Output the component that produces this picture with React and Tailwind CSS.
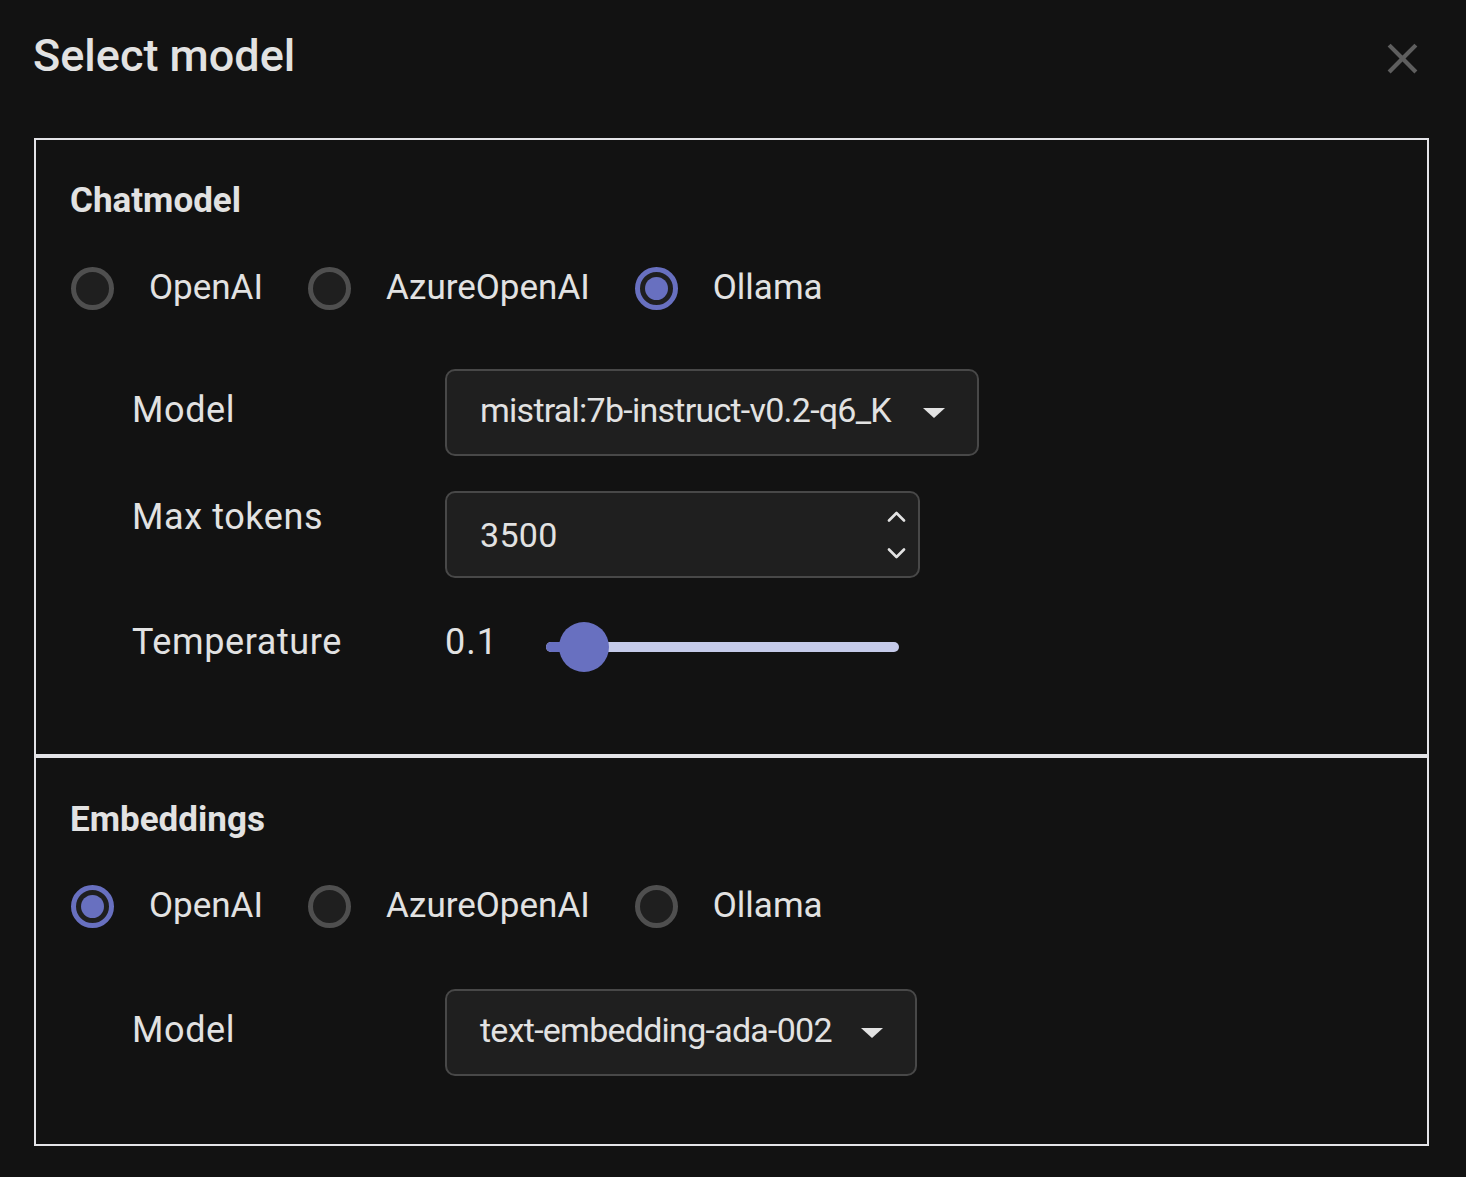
import React, { useState } from 'react';

const ACCENT = '#6870c0';

function Radio({ label, checked, onSelect }) {
  return (
    <button type="button" onClick={onSelect} className="flex items-center h-[60px]">
      <span
        className={
          checked
            ? 'w-[43px] h-[43px] rounded-full border-[5px] border-[#6870c0] bg-[#1f1f1f] flex items-center justify-center'
            : 'w-[43px] h-[43px] rounded-full border-[5px] border-[#4f4f4f] bg-[#1f1f1f]'
        }
      >
        {checked && <span className="w-[23px] h-[23px] rounded-full bg-[#6870c0]" />}
      </span>
      <span className="ml-[35px] text-[35px] leading-[42px] text-[#e2e2e2]">{label}</span>
    </button>
  );
}

function RadioGroup({ options, value, onChange }) {
  return (
    <div className="flex items-center gap-[45px]">
      {options.map(o => (
        <Radio key={o} label={o} checked={value === o} onSelect={() => onChange(o)} />
      ))}
    </div>
  );
}

function Caret() {
  return (
    <svg width="24" height="12" viewBox="0 0 24 12" className="shrink-0">
      <polygon points="1,1 23,1 12,11" fill="#e2e2e2" />
    </svg>
  );
}

function Select({ value, width }) {
  return (
    <div
      className={`${width} h-[87px] rounded-[10px] border-2 border-[#484848] bg-[#1f1f1f] flex items-center justify-between pl-[33px] pr-[31px]`}
    >
      <span className="mb-[5px] whitespace-nowrap text-[34px] leading-[42px] text-[#e2e2e2] tracking-[-0.75px]">{value}</span>
      <Caret />
    </div>
  );
}

function Spinner() {
  return (
    <div className="flex flex-col gap-[26px] items-center">
      <svg width="19" height="11" viewBox="0 0 19 11">
        <polyline points="2,9.5 9.5,2 17,9.5" fill="none" stroke="#e2e2e2" strokeWidth="2.6" strokeLinecap="round" strokeLinejoin="round" />
      </svg>
      <svg width="19" height="11" viewBox="0 0 19 11">
        <polyline points="2,1.5 9.5,9 17,1.5" fill="none" stroke="#e2e2e2" strokeWidth="2.6" strokeLinecap="round" strokeLinejoin="round" />
      </svg>
    </div>
  );
}

function Label({ children, className = '' }) {
  return (
    <div className={`w-[313px] shrink-0 -ml-[1px] text-[36px] leading-[42px] text-[#e2e2e2] tracking-[0.6px] ${className}`}>
      {children}
    </div>
  );
}

export default function App() {
  const [chat, setChat] = useState('Ollama');
  const [embed, setEmbed] = useState('OpenAI');
  const providers = ['OpenAI', 'AzureOpenAI', 'Ollama'];

  return (
    <div
      className="w-full min-h-[1177px] bg-[#121212] pl-[34px] pr-[37px] text-[#e2e2e2]"
      style={{ fontFamily: 'Roboto, "Noto Sans", sans-serif' }}
    >
      {/* header */}
      <div className="flex items-center justify-between h-[110px] mb-[28px]">
        <h1 className="text-[45px] leading-none font-medium text-[#e2e2e2] -ml-[1px]">Select model</h1>
        <svg width="51" height="51" viewBox="0 0 24 24" className="mt-[6px] mr-[1px]">
          <path
            fill="#5e5e5e"
            d="M19 6.41 17.59 5 12 10.59 6.41 5 5 6.41 10.59 12 5 17.59 6.41 19 12 13.41 17.59 19 19 17.59 13.41 12z"
          />
        </svg>
      </div>

      {/* chat model */}
      <section className="h-[618px] border-2 border-[#e4e4e8] pt-[31px] pl-[35px]">
        <h2 className="h-[60px] flex items-center text-[35px] font-bold text-[#e2e2e2] -ml-[1px]">Chatmodel</h2>
        <div className="mt-[27px]">
          <RadioGroup options={providers} value={chat} onChange={setChat} />
        </div>

        <div className="ml-[62px] flex flex-col">
          <div className="mt-[51px] flex items-center">
            <Label className="-mt-[6px]">Model</Label>
            <Select value="mistral:7b-instruct-v0.2-q6_K" width="w-[534px]" />
          </div>

          <div className="mt-[35px] flex items-start">
            <Label className="pt-[5px]">Max tokens</Label>
            <div className="w-[475px] h-[87px] rounded-[10px] border-2 border-[#484848] bg-[#1f1f1f] flex items-center justify-between pl-[33px] pr-[12px]">
              <span className="text-[34px] leading-[42px] text-[#e2e2e2] tracking-[0.3px]">3500</span>
              <Spinner />
            </div>
          </div>

          <div className="mt-[37px] h-[64px] flex items-center">
            <Label className="mb-[10px]">Temperature</Label>
            <div className="w-[101px] shrink-0 text-[36px] leading-[42px] text-[#e2e2e2] tracking-[1px] mb-[10px]">0.1</div>
            <div className="relative w-[353px] h-[10px] rounded-full bg-[#c5cae9]">
              <div className="absolute left-0 top-0 h-[10px] w-[40px] rounded-full bg-[#6870c0]" />
              <div
                className="absolute top-1/2 -translate-y-1/2 left-[13px] w-[50px] h-[50px] rounded-full"
                style={{ backgroundColor: ACCENT }}
              />
            </div>
          </div>
        </div>
      </section>

      {/* embeddings */}
      <section className="h-[390px] border-2 border-[#e4e4e8] pt-[32px] pl-[35px]">
        <h2 className="h-[60px] flex items-center text-[35px] font-bold text-[#e2e2e2] -ml-[1px]">Embeddings</h2>
        <div className="mt-[26px]">
          <RadioGroup options={providers} value={embed} onChange={setEmbed} />
        </div>
        <div className="ml-[62px] mt-[53px] flex items-center">
          <Label className="-mt-[6px]">Model</Label>
          <Select value="text-embedding-ada-002" width="w-[472px]" />
        </div>
      </section>
    </div>
  );
}
